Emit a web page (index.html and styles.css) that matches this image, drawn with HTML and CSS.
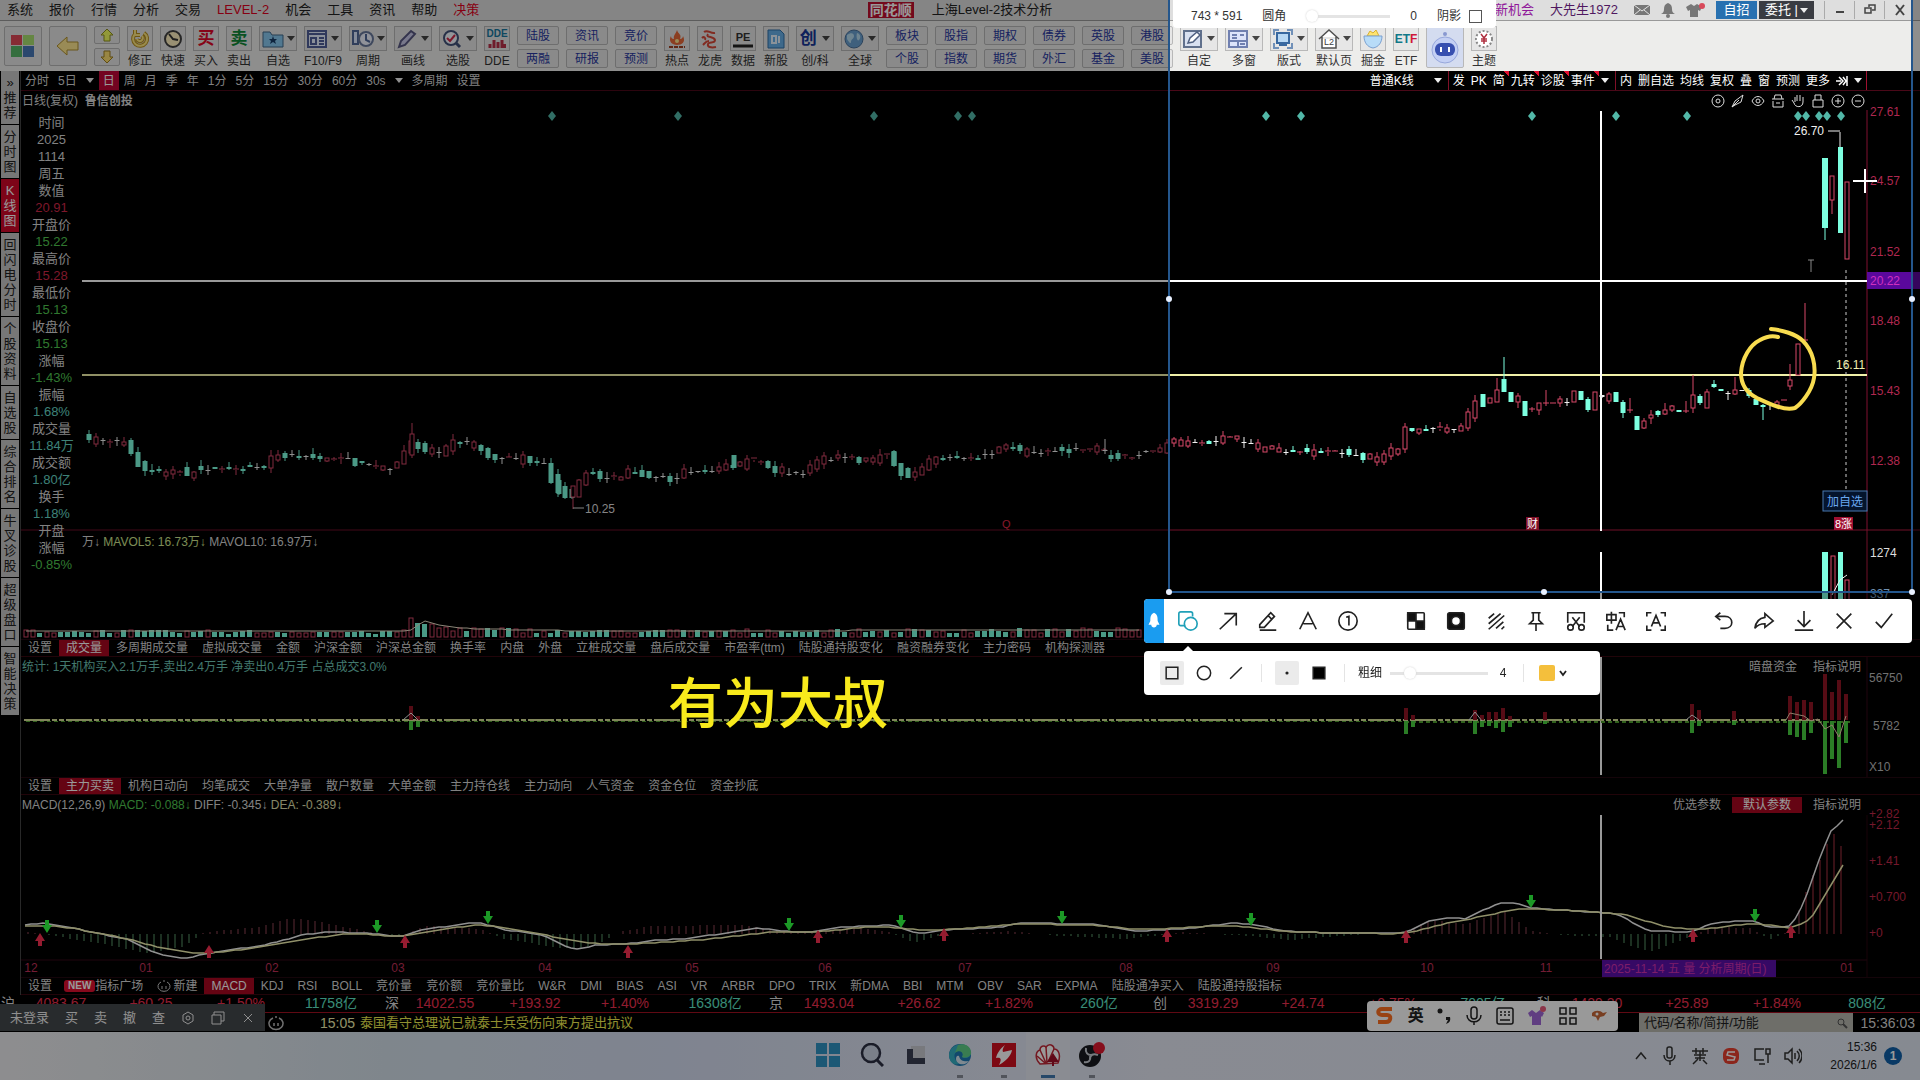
FILE: index.html
```html
<!DOCTYPE html>
<html lang="zh-CN">
<head>
    <meta charset="UTF-8">
    <title>同花顺 上海Level-2技术分析</title>
    <link rel="stylesheet" href="styles.css">
</head>
<body>
<div class="app">

    <!-- 标题栏 -->
    <header class="titlebar">
        <nav class="menu">
            <a href="#">系统</a><a href="#">报价</a><a href="#">行情</a><a href="#">分析</a><a href="#">交易</a><a href="#" class="hot">LEVEL-2</a><a href="#">机会</a><a href="#">工具</a><a href="#">资讯</a><a href="#">帮助</a><a href="#" class="hot">决策</a>
        </nav>
        <div class="brand"><span class="brand-logo">同花顺</span><span>上海Level-2技术分析</span></div>
        <div class="account">
            <a href="#" class="chance">最新机会</a>
            <span class="user">大先生1972</span>
            <svg width="16" height="16" viewBox="0 0 16 16"><path d="M0 3h16v10H0z" fill="#777"/><path d="M0 3l8 6 8-6M0 13l6-5M16 13l-6-5" stroke="#e4e4e4" fill="none"/></svg>
            <svg width="16" height="16" viewBox="0 0 16 16"><path d="M8 1c-3 1-4 3-4 6 0 3-1 4-3 5h14c-2-1-3-2-3-5 0-3-1-5-4-6z" fill="#777"/><circle cx="8" cy="14" r="2" fill="#777"/></svg>
            <svg width="20" height="16" viewBox="0 0 20 16"><path d="M5 2l3 2 3-2 5 3-2 4-2-1v7H4V8L2 9 0 5z" fill="#777"/><circle cx="16" cy="4" r="3" fill="#d8495a"/></svg>
            <button class="tag blue">自招</button>
            <button class="tag dark">委托 | <i class="caret light"></i></button>
            <button class="win" aria-label="最小化"><svg width="12" height="12" viewBox="0 0 12 12"><path d="M2 8h8" stroke="#444" stroke-width="2"/></svg></button>
            <button class="win" aria-label="还原"><svg width="12" height="12" viewBox="0 0 12 12"><path d="M1 4h6v5H1zM5 3V1h6v5H8" stroke="#444" fill="none" stroke-width="1.5"/></svg></button>
            <button class="win" aria-label="关闭"><svg width="12" height="12" viewBox="0 0 12 12"><path d="M2 1l8 10M10 1L2 11" stroke="#444" stroke-width="2"/></svg></button>
        </div>
    </header>

    <!-- 工具栏 -->
    <div class="toolbar">
        <button class="big" aria-label="主页"><svg width="26" height="26" viewBox="0 0 26 26"><path d="M1 2h11v10H1z" fill="#e04858"/><path d="M13 2h11v10H13z" fill="#a8e070"/><path d="M1 13h11v11H1z" fill="#58b868"/><path d="M13 13h11v11H13z" fill="#4878b8"/></svg></button>
        <button class="big" aria-label="后退"><svg width="26" height="24" viewBox="0 0 26 24"><path d="M2 12L12 3v5h11v8H12v5z" fill="#ffe890" stroke="#b09030"/></svg></button>
        <div class="updown">
            <button aria-label="上翻"><svg width="14" height="14" viewBox="0 0 14 14"><path d="M7 1l6 6h-3v6H4V7H1z" fill="#f4ff60" stroke="#909020"/></svg></button>
            <button aria-label="下翻"><svg width="14" height="14" viewBox="0 0 14 14"><path d="M7 13l6-6h-3V1H4v6H1z" fill="#ffe070" stroke="#a08020"/></svg></button>
        </div>
        <button class="tool"><span class="face"><svg width="20" height="20" viewBox="0 0 20 20"><path d="M5 5a7 7 0 1 0 9-1M5 1v5h5M7 10a3 3 0 1 0 5-3" fill="none" stroke="#b89020" stroke-width="4"/><path d="M5 5a7 7 0 1 0 9-1M5 1v5h5M7 10a3 3 0 1 0 5-3" fill="none" stroke="#ffe880" stroke-width="2"/></svg></span>修正</button>
        <button class="tool"><span class="face"><svg width="20" height="20" viewBox="0 0 20 20"><circle cx="10" cy="10" r="8" fill="#fff0c0" stroke="#404040" stroke-width="2"/><path d="M6 5l4 5 5 1" stroke="#333" fill="none" stroke-width="2"/></svg></span>快速</button>
        <button class="tool"><span class="face glyph buy">买</span>买入</button>
        <button class="tool"><span class="face glyph sell">卖</span>卖出</button>
        <button class="tool drop"><span class="face"><svg width="22" height="20" viewBox="0 0 22 20"><path d="M1 3h7l2 3h11v12H1z" fill="#88c8f0" stroke="#40688a"/><path d="M11 7l1 3h3l-2 2 1 3-3-2-3 2 1-3-2-2h3z" fill="#183c68"/></svg><i class="caret"></i></span>自选</button>
        <button class="tool drop"><span class="face"><svg width="20" height="20" viewBox="0 0 20 20"><path d="M1 2h18v16H1z" fill="#e8f0ff" stroke="#50609a" stroke-width="2"/><path d="M1 5h18M4 9h5v6H4zM12 9h5M12 12h5M12 15h5" stroke="#50609a" fill="none" stroke-width="2"/></svg><i class="caret"></i></span>F10/F9</button>
        <button class="tool drop"><span class="face"><svg width="22" height="20" viewBox="0 0 22 20"><path d="M1 2h5v13H1z" fill="#dce8ff" stroke="#506898" stroke-width="2"/><circle cx="14" cy="10" r="7" fill="#f0f4ff" stroke="#68789c" stroke-width="2"/><path d="M14 5v6l4 2" stroke="#506898" fill="none" stroke-width="2"/></svg><i class="caret"></i></span>周期</button>
        <button class="tool drop"><span class="face"><svg width="20" height="20" viewBox="0 0 20 20"><path d="M2 18l2-6L14 2l4 3L8 16z" fill="#c8c8e8" stroke="#585880" stroke-width="2"/></svg><i class="caret"></i></span>画线</button>
        <button class="tool drop"><span class="face"><svg width="20" height="20" viewBox="0 0 20 20"><circle cx="9" cy="9" r="7" fill="#f4f8ff" stroke="#405078" stroke-width="2"/><path d="M14 14l4 4" stroke="#405078" stroke-width="3"/><path d="M5 9l3 3 5-6" stroke="#d02848" fill="none" stroke-width="2"/></svg><i class="caret"></i></span>选股</button>
        <button class="tool"><span class="face col"><b class="dde">DDE</b><svg width="18" height="9" viewBox="0 0 18 9"><path d="M2 9V5M6 9V1M10 9V3M14 9V1M17 9V5" stroke="#b83048" stroke-width="3"/></svg></span>DDE</button>
        <div class="pair"><button>陆股</button><button>两融</button></div>
        <div class="pair"><button>资讯</button><button>研报</button></div>
        <div class="pair"><button>竞价</button><button>预测</button></div>
        <button class="tool"><span class="face"><svg width="20" height="20" viewBox="0 0 20 20"><path d="M10 1c1 4 5 4 3 9 2 0 3-2 3-3 3 6-1 9-6 9s-9-4-6-9c0 2 1 3 3 3-1-4 2-5 3-9z" fill="#e86838"/><circle cx="10" cy="12" r="2" fill="#ffe890"/><path d="M2 18h16" stroke="#a04020" stroke-width="2" stroke-dasharray="4 1"/></svg></span>热点</button>
        <button class="tool"><span class="face"><svg width="20" height="20" viewBox="0 0 20 20"><path d="M4 3c4-3 6 2 11 1M8 5c-3 4 6 2 7 6 0 4-6 1-7 4s3 4 8 3M2 9c2-2 4 0 3 2M3 16c2-2 3-4 6-4" stroke="#d84838" fill="none" stroke-width="2"/></svg></span>龙虎</button>
        <button class="tool"><span class="face col"><b class="pe">PE</b><svg width="20" height="4" viewBox="0 0 20 4"><path d="M0 2h20" stroke="#222" stroke-width="3"/></svg></span>数据</button>
        <button class="tool"><span class="face"><svg width="18" height="20" viewBox="0 0 18 20"><path d="M1 1h12l4 4v14H1z" fill="#68b0e8" stroke="#3070a8"/><path d="M5 7h4v7H5zM12 7v7" stroke="#e8f4ff" fill="none" stroke-width="2"/></svg></span>新股</button>
        <button class="tool drop"><span class="face glyph new">创<i class="caret"></i></span>创/科</button>
        <button class="tool drop"><span class="face"><svg width="20" height="20" viewBox="0 0 20 20"><circle cx="10" cy="10" r="9" fill="#6aa0d0" stroke="#48709a"/><path d="M3 6c4-3 7-2 7 1s-3 3-3 6-3-1-4-3zM13 4c4 1 4 5 2 7s-3-4-2-7z" fill="#b8dcf0"/></svg><i class="caret"></i></span>全球</button>
        <div class="pair"><button>板块</button><button>个股</button></div>
        <div class="pair"><button>股指</button><button>指数</button></div>
        <div class="pair"><button>期权</button><button>期货</button></div>
        <div class="pair"><button>债券</button><button>外汇</button></div>
        <div class="pair"><button>英股</button><button>基金</button></div>
        <div class="pair"><button>港股</button><button>美股</button></div>
        <button class="tool drop"><span class="face"><svg width="20" height="20" viewBox="0 0 20 20"><path d="M1 2h17v16H1z" fill="#d8e0f0" stroke="#60708c" stroke-width="2"/><path d="M5 14l2-5 7-6 3 3-7 7z" fill="#fff" stroke="#506080" stroke-width="1.5"/></svg><i class="caret"></i></span>自定</button>
        <button class="tool drop"><span class="face"><svg width="20" height="20" viewBox="0 0 20 20"><path d="M1 2h18v16H1z" fill="#dde4fa" stroke="#7080b0" stroke-width="2"/><path d="M4 6h5M12 6h4M4 9h5M1 12h18M10 12v6M12 15h5" stroke="#7080b0" stroke-width="2"/></svg><i class="caret"></i></span>多窗</button>
        <button class="tool drop"><span class="face"><svg width="20" height="20" viewBox="0 0 20 20"><path d="M1 6V1h5M14 1h5v5M19 14v5h-5M6 19H1v-5" stroke="#7090b8" fill="none" stroke-width="2"/><path d="M4 4h12v10H4z" fill="#b8d8f4" stroke="#3868a0" stroke-width="2"/><path d="M6 16h8" stroke="#3868a0" stroke-width="2"/></svg><i class="caret"></i></span>版式</button>
        <button class="tool drop"><span class="face"><svg width="22" height="20" viewBox="0 0 22 20"><path d="M1 10L11 1l10 9M4 8v11h14V8" fill="#fff" stroke="#505050" stroke-width="1.5"/><text x="6" y="16" font-size="9" fill="#404040">L2</text></svg><i class="caret"></i></span>默认页</button>
        <button class="tool"><span class="face"><svg width="22" height="20" viewBox="0 0 22 20"><path d="M5 7l3-5 3 2 3-3 3 6z" fill="#ffe470" stroke="#d8b030"/><path d="M2 7h18c0 6-3 11-9 12C5 18 2 13 2 7z" fill="#b8dcf8" stroke="#7aa0d0"/></svg></span>掘金</button>
        <button class="tool"><span class="face etf">ET<b>F</b></span>ETF</button>
        <button class="robot" aria-label="问财"><svg width="28" height="34" viewBox="0 0 28 34"><circle cx="14" cy="4" r="2" fill="#8898d0"/><circle cx="14" cy="20" r="13" fill="#c4d0f4" stroke="#98a8dc"/><rect x="4" y="13" width="20" height="13" rx="6" fill="#3850b0"/><path d="M10 17v5M18 17v5" stroke="#fff" stroke-width="2"/></svg></button>
        <button class="tool"><span class="face"><svg width="20" height="20" viewBox="0 0 20 20"><circle cx="10" cy="10" r="8" fill="#fff" stroke="#888" stroke-width="2" stroke-dasharray="2 2"/><path d="M7 5l3 4 3-4M10 9v6M7 10h6M7 12h6" stroke="#b03040" fill="none" stroke-width="1.5"/></svg></span>主题</button>
    </div>

    <div class="workspace">
        <nav class="sidebar">
            <button>» 推荐</button>
            <button>分时图</button>
            <button class="on">K 线图</button>
            <button>回闪电分时</button>
            <button>个股资料</button>
            <button>自选股</button>
            <button>综合排名</button>
            <button>牛叉诊股</button>
            <button>超级盘口</button>
            <button>智能决策</button>
        </nav>

        <main class="terminal">
            <div class="periods">
                <div class="group">
                    <button>分时</button><button>5日</button><i class="caret light"></i><button class="on">日</button><button>周</button><button>月</button><button>季</button><button>年</button><button>1分</button><button>5分</button><button>15分</button><button>30分</button><button>60分</button><button>30s</button><i class="caret light"></i><button>多周期</button><button>设置</button>
                </div>
                <div class="group right">
                    <button class="kline">普通K线</button><i class="caret light"></i><button class="cut">发</button><button>PK</button><button class="new">简</button><button class="new">九转</button><button class="new">诊股</button><button class="new">事件</button><i class="caret light"></i><button class="cut">内</button><button>删自选</button><button>均线</button><button>复权</button><button>叠</button><button>窗</button><button>预测</button><button>更多</button><svg width="12" height="12" viewBox="0 0 12 12"><path d="M0 6h5M3 2l4 4-4 4M7 2l3 4-3 4M11 1v10" stroke="#fff" fill="none" stroke-width="1.5"/></svg><i class="caret light"></i>
                </div>
            </div>
            <div class="caption">
                <span>日线(复权)&nbsp; <b>鲁信创投</b></span>
                <div class="draw-tools">
                    <svg viewBox="0 0 14 14"><circle cx="7" cy="7" r="6"/><circle cx="7" cy="7" r="2"/></svg>
                    <svg viewBox="0 0 14 14"><path d="M1 13l3-6 8-6-2 7-6 3zM1 13l7-7"/></svg>
                    <svg viewBox="0 0 14 14"><path d="M1 7c3-6 9-6 12 0-3 6-9 6-12 0z"/><circle cx="7" cy="7" r="2"/></svg>
                    <svg viewBox="0 0 14 14"><path d="M1 5h12M3 5l1-4h6l1 4M2 7v6h10V7M5 9h4"/></svg>
                    <svg viewBox="0 0 14 14"><path d="M3 9L1 6M4 8V3M6 7V1M9 7V1M12 8V3M3 9c1 5 9 5 9-1"/></svg>
                    <svg viewBox="0 0 14 14"><path d="M2 6h10v7H2zM4 6V1h6v5"/></svg>
                    <svg viewBox="0 0 14 14"><circle cx="7" cy="7" r="6"/><path d="M4 7h6M7 4v6"/></svg>
                    <svg viewBox="0 0 14 14"><circle cx="7" cy="7" r="6"/><path d="M4 7h6"/></svg>
                </div>
            </div>

            <div class="stage">
                <svg id="price" class="chart" viewBox="21 110 1899 421" preserveAspectRatio="none"></svg>
                <svg id="volume" class="chart" viewBox="21 531 1899 108" preserveAspectRatio="none"></svg>
                <ul class="quote">
                    <li>时间</li><li>2025</li><li>1114</li><li>周五</li>
                    <li>数值</li><li class="up">20.91</li>
                    <li>开盘价</li><li class="down">15.22</li>
                    <li>最高价</li><li class="up">15.28</li>
                    <li>最低价</li><li class="down">15.13</li>
                    <li>收盘价</li><li class="down">15.13</li>
                    <li>涨幅</li><li class="down">-1.43%</li>
                    <li>振幅</li><li class="flat">1.68%</li>
                    <li>成交量</li><li class="flat">11.84万</li>
                    <li>成交额</li><li class="flat">1.80亿</li>
                    <li>换手</li><li class="flat">1.18%</li>
                    <li>开盘</li><li>涨幅</li><li class="down">-0.85%</li>
                </ul>
                <div class="volume-head">万↓ <span class="lime">MAVOL5: 16.73万↓</span> MAVOL10: 16.97万↓</div>
            </div>

            <div class="tabs">
                <button>设置</button><button class="on">成交量</button><button>多周期成交量</button><button>虚拟成交量</button><button>金额</button><button>沪深金额</button><button>沪深总金额</button><button>换手率</button><button>内盘</button><button>外盘</button><button>立桩成交量</button><button>盘后成交量</button><button>市盈率(ttm)</button><button>陆股通持股变化</button><button>融资融券变化</button><button>主力密码</button><button>机构探测器</button>
            </div>
            <section class="panel force">
                <svg id="force" class="chart" viewBox="21 657 1899 120" preserveAspectRatio="none"></svg>
                <div class="panel-head">
                    <span class="stat">统计: 1天机构买入2.1万手,卖出2.4万手 净卖出0.4万手 占总成交3.0%</span>
                    <span class="links"><button>暗盘资金</button><button>指标说明</button></span>
                </div>
            </section>

            <div class="tabs">
                <button>设置</button><button class="on">主力买卖</button><button>机构日动向</button><button>均笔成交</button><button>大单净量</button><button>散户数量</button><button>大单金额</button><button>主力持仓线</button><button>主力动向</button><button>人气资金</button><button>资金仓位</button><button>资金抄底</button>
            </div>
            <section class="panel macd">
                <svg id="macd" class="chart" viewBox="21 795 1899 182" preserveAspectRatio="none"></svg>
                <div class="panel-head">
                    <span>MACD(12,26,9) <span class="down">MACD: -0.088↓</span> DIFF: -0.345↓ <span class="pale">DEA: -0.389↓</span></span>
                    <span class="links wide"><button>优选参数</button><button class="on">默认参数</button><button>指标说明</button></span>
                </div>
            </section>

            <div class="tabs">
                <button>设置</button><button class="badge-tab"><b class="badge">NEW</b>指标广场</button><button><svg width="14" height="12" viewBox="0 0 14 12"><path d="M4 2a6 5 0 1 0 6 0M5 6v3M9 6v3M7 0v2" stroke="#ccc" fill="none"/></svg> 新建</button><button class="on">MACD</button><button>KDJ</button><button>RSI</button><button>BOLL</button><button>竞价量</button><button>竞价额</button><button>竞价量比</button><button>W&amp;R</button><button>DMI</button><button>BIAS</button><button>ASI</button><button>VR</button><button>ARBR</button><button>DPO</button><button>TRIX</button><button>新DMA</button><button>BBI</button><button>MTM</button><button>OBV</button><button>SAR</button><button>EXPMA</button><button>陆股通净买入</button><button>陆股通持股指标</button>
            </div>
        </main>
    </div>

    <!-- 指数行情 -->
    <div class="indices">
        <div><b>沪</b><span>4083.67</span><span>+60.25</span><span>+1.50%</span><em>11758亿</em></div>
        <div><b>深</b><span>14022.55</span><span>+193.92</span><span>+1.40%</span><em>16308亿</em></div>
        <div><b>京</b><span>1493.04</span><span>+26.62</span><span>+1.82%</span><em>260亿</em></div>
        <div><b>创</b><span>3319.29</span><span>+24.74</span><span>+0.75%</span><em>7005亿</em></div>
        <div><b>科</b><span>1429.30</span><span>+25.89</span><span>+1.84%</span><em>808亿</em></div>
    </div>
    <div class="statusbar">
        <svg width="16" height="16" viewBox="0 0 16 16"><path d="M5 3a7 6 0 1 0 6 0M6 8v3M10 8v3M8 1v2" stroke="#bbb" fill="none" stroke-width="1.5"/></svg>
        <span class="news-time">15:05</span>
        <a href="#" class="news">泰国看守总理说已就泰士兵受伤向柬方提出抗议</a>
        <label class="search"><input type="text" placeholder="代码/名称/简拼/功能" aria-label="代码搜索"><svg width="12" height="12" viewBox="0 0 12 12"><circle cx="5" cy="5" r="3" fill="none" stroke="#555"/><path d="M7 7l4 4" stroke="#555" stroke-width="2"/></svg></label>
        <span class="clock">15:36:03</span>
    </div>

    <!-- 任务栏 -->
    <footer class="taskbar">
        <div class="apps">
            <button aria-label="开始"><svg width="24" height="24" viewBox="0 0 24 24"><path d="M0 0h11v11H0zM13 0h11v11H13zM0 13h11v11H0zM13 13h11v11H13z" fill="#2f93c4"/></svg></button>
            <button aria-label="搜索"><svg width="24" height="24" viewBox="0 0 24 24"><circle cx="11" cy="10" r="9" fill="#ccd4e4" stroke="#2c3044" stroke-width="2.5"/><path d="M17 17l6 6" stroke="#2c3044" stroke-width="3"/></svg></button>
            <button aria-label="任务视图"><svg width="22" height="22" viewBox="0 0 22 22"><path d="M6 2h14v14H6z" fill="#c8cad0"/><path d="M2 5h6v9h12v6H2z" fill="#3a3f52"/></svg></button>
            <button class="run" aria-label="Edge"><svg width="24" height="24" viewBox="0 0 24 24"><circle cx="12" cy="12" r="11" fill="#1d78b4"/><path d="M1 12C2-1 22-3 23 10c0 5-6 6-9 4 3-5-3-8-6-5-2 2-3 7 3 12C5 23 1 18 1 12z" fill="#36b0c4"/><path d="M10 2c8-3 14 3 13 9-2 4-7 4-9 3 3-5-3-8-7-4z" fill="#5fcf88"/><path d="M11 13c1 5 6 6 10 5-5 6-13 3-13-2 0-2 1-4 3-3z" fill="#d4e4f0"/></svg></button>
            <button class="run" aria-label="交易软件"><svg width="24" height="24" viewBox="0 0 24 24"><path d="M0 0h24v24H0z" fill="#d01020"/><path d="M13 2c-2 3-3 5-2 7l9-2c-1 6-6 11-13 15 3-6 2-8-3-7 1-5 5-10 9-13z" fill="#fff"/></svg></button>
            <button class="run active" aria-label="同花顺"><svg width="26" height="24" viewBox="0 0 26 24"><path d="M5 21C-1 15 1 8 5 7c0-4 4-5 6-3 3-4 8-2 8 2 5 0 7 7 4 14z" fill="#fff" stroke="#c02838" stroke-width="1.5"/><path d="M11 20L5 7M12 20L11 4M13 19l6-13M10 20L2 13" stroke="#c02838" stroke-width="1.5"/><path d="M18 10l6 9H12z" fill="#a01028"/><path d="M18 17v6" stroke="#a01028" stroke-width="2"/></svg></button>
            <button class="run" aria-label="OBS"><svg width="28" height="26" viewBox="0 0 28 26"><circle cx="12" cy="14" r="11" fill="#181a20"/><path d="M8 6c-1 5 2 7 5 7M20 13c-5-2-8 0-8 4M6 20c5 1 7-2 6-6" stroke="#c8ccd4" fill="none" stroke-width="2"/><circle cx="21" cy="6" r="6" fill="#e01830"/></svg></button>
        </div>
        <div class="tray">
            <svg width="16" height="16" viewBox="0 0 16 16"><path d="M3 11l5-6 5 6"/></svg>
            <svg width="16" height="20" viewBox="0 0 16 20"><rect x="5" y="1" width="5" height="11" rx="2"/><path d="M2 9c0 8 11 8 11 0M8 15v4"/></svg>
            <svg width="18" height="18" viewBox="0 0 18 18"><path d="M1 4h16M5 1v6M12 1v6M3 8h12M9 4v10M4 11h10M2 17l5-5M16 17l-4-4"/></svg>
            <svg width="18" height="18" viewBox="0 0 18 18"><rect x="1" y="1" width="16" height="16" rx="6" fill="#e84030" stroke="none"/><path d="M13 5H6L5 8l8 2-1 3H5" stroke="#fff"/></svg>
            <svg width="18" height="18" viewBox="0 0 18 18"><path d="M11 2H2v11h9M13 2h4v5h-4zM15 7v9M6 17h6"/></svg>
            <svg width="18" height="18" viewBox="0 0 18 18"><path d="M1 6h3l4-4v14l-4-4H1zM11 6v6M13 4c3 3 3 7 0 10M15 2c4 4 4 10 0 14"/></svg>
            <div class="date"><span>15:36</span><span>2026/1/6</span></div>
            <b class="count">1</b>
        </div>
    </footer>
</div>

<!-- 浮动条 -->
<div class="login-bar">
    <button>未登录</button><button>买</button><button>卖</button><button>撤</button><button>查</button>
    <button aria-label="设置"><svg width="14" height="14" viewBox="0 0 14 14"><path d="M7 1l5 3v6l-5 3-5-3V4z"/><circle cx="7" cy="7" r="2"/></svg></button>
    <button aria-label="弹出"><svg width="14" height="14" viewBox="0 0 14 14"><path d="M1 4h9v9H1zM3 4V1h10v9h-3"/></svg></button>
    <button aria-label="关闭"><svg width="14" height="14" viewBox="0 0 14 14"><path d="M3 3l8 8M11 3l-8 8"/></svg></button>
</div>
<div class="ime">
    <svg width="20" height="20" viewBox="0 0 20 20"><path d="M17 3H7C2 3 2 9 7 9h5c5 0 4 7-1 7H3" stroke="#ff7020" stroke-width="4" fill="none"/></svg>
    <b>英</b>
    <svg width="16" height="20" viewBox="0 0 16 20"><circle cx="4" cy="5" r="2.5" fill="#222" stroke="none"/><path d="M10 11h4c1 4-1 6-4 7l2-4h-2z" fill="#222" stroke="none"/></svg>
    <svg width="18" height="20" viewBox="0 0 18 20"><rect x="6" y="1" width="6" height="12" rx="3"/><path d="M2 9c0 9 14 9 14 0M9 15v4"/></svg>
    <svg width="18" height="20" viewBox="0 0 18 20"><rect x="1" y="2" width="16" height="16" rx="2"/><path d="M4 6h10M4 9h10" stroke-dasharray="2 2"/><path d="M4 14h10"/></svg>
    <svg width="20" height="20" viewBox="0 0 20 20"><path d="M5 4l4 3 4-3 4 3-2 4-1-1v9H5v-9l-2 1-2-4z" fill="#a068d8" stroke="none"/><circle cx="16" cy="3" r="3" fill="#e85878" stroke="none"/></svg>
    <svg width="18" height="20" viewBox="0 0 18 20"><rect x="1" y="2" width="6" height="6"/><rect x="11" y="2" width="6" height="6"/><rect x="1" y="12" width="6" height="6"/><rect x="11" y="12" width="6" height="6"/></svg>
    <svg width="18" height="16" viewBox="0 0 18 16"><path d="M2 5c3-3 8-3 11 0l4-1-3 4-4 1-2 4-2-4-4-1z" fill="#c86838" stroke="none"/><circle cx="7" cy="6" r="1.5" fill="#fff" stroke="none"/></svg>
</div>

<!-- 截图选区 -->
<div class="selection">
    <i class="handle w"></i><i class="handle e"></i><i class="handle sw"></i><i class="handle s"></i><i class="handle se"></i>
</div>

<div class="snip-size">
    <span>743 * 591</span>
    <label for="radius">圆角</label>
    <input type="range" id="radius" min="0" max="50" value="0">
    <output for="radius">0</output>
    <label class="shadow-opt">阴影 <input type="checkbox"></label>
</div>

<div class="snip">
    <div class="snip-bar">
        <span class="snip-tab"><svg width="14" height="24" viewBox="0 0 14 24"><path d="M7 3c4 2 4 5 4 9l2 4h-3c0 4-6 4-6 0H1l2-4c0-4 0-7 4-9z" fill="#fff"/></svg></span>
        <button class="sel" aria-label="形状"><svg viewBox="0 0 24 24"><path d="M9 17H4a2 2 0 0 1-2-2V4a2 2 0 0 1 2-2h11a2 2 0 0 1 2 2v3"/><circle cx="15" cy="15" r="7"/></svg></button>
        <button aria-label="箭头"><svg viewBox="0 0 24 24"><path d="M3 21L21 4M8 4h13v13"/></svg></button>
        <button aria-label="画笔"><svg viewBox="0 0 24 24"><path d="M3 16L15 3l4 4L8 19H3zM12 6l4 4M3 22h18"/></svg></button>
        <button aria-label="文字"><svg viewBox="0 0 24 24"><path d="M3 21l9-18 9 18M7 15h10"/></svg></button>
        <button aria-label="序号"><svg viewBox="0 0 24 24"><circle cx="12" cy="12" r="10"/><path d="M10 8l3-1v10"/></svg></button>
        <span class="gap"></span>
        <button aria-label="马赛克"><svg viewBox="0 0 24 24"><rect x="3" y="3" width="18" height="18" rx="1"/><path d="M3 3h9v9H3zM12 12h9v9h-9z" fill="#111"/></svg></button>
        <button aria-label="聚光灯"><svg viewBox="0 0 24 24"><rect x="3" y="3" width="18" height="18" rx="2" fill="#111"/><circle cx="12" cy="12" r="5" fill="#fff"/></svg></button>
        <button aria-label="水印"><svg viewBox="0 0 24 24"><path d="M4 9l6-5M4 15L17 4M4 21L21 6M12 20l8-7M18 21l3-3"/></svg></button>
        <button aria-label="贴图"><svg viewBox="0 0 24 24"><path d="M7 3h10M9 3v8l-4 4h14l-4-4V3M12 15v8"/></svg></button>
        <button aria-label="截长图"><svg viewBox="0 0 24 24"><path d="M3 14V3h18v11M8 8l8 10M16 8L8 18"/><circle cx="6" cy="19" r="3"/><circle cx="18" cy="19" r="3"/></svg></button>
        <button aria-label="翻译"><svg viewBox="0 0 24 24"><path d="M2 5h10v6H2zM7 2v13M15 3h6v5M3 16v6h6M12 22l5-12 5 12M14 18h6"/></svg></button>
        <button aria-label="识别文字"><svg viewBox="0 0 24 24"><path d="M2 7V3h5M17 3h5v4M22 17v5h-5M7 22H2v-5M7 18l5-12 5 12M9 14h6"/></svg></button>
        <span class="gap"></span>
        <button aria-label="撤销"><svg viewBox="0 0 24 24"><path d="M8 3L3 7l5 4M3 7h10c10 0 10 13 0 13H8"/></svg></button>
        <button aria-label="分享"><svg viewBox="0 0 24 24"><path d="M13 4l9 8-9 7v-4c-5 0-8 1-11 5 1-7 4-11 11-12z"/></svg></button>
        <button aria-label="保存"><svg viewBox="0 0 24 24"><path d="M12 1v16M5 11l7 7 7-7M2 22h20"/></svg></button>
        <button aria-label="取消"><svg viewBox="0 0 24 24"><path d="M4 4l16 16M20 4L4 20"/></svg></button>
        <button aria-label="完成"><svg viewBox="0 0 24 24"><path d="M3 13l6 6L21 4"/></svg></button>
    </div>
    <div class="snip-opts">
        <button class="pick" aria-label="矩形"><svg viewBox="0 0 24 24"><path d="M5 5h14v14H5z"/></svg></button>
        <button aria-label="椭圆"><svg viewBox="0 0 24 24"><circle cx="12" cy="12" r="8"/></svg></button>
        <button aria-label="直线"><svg viewBox="0 0 24 24"><path d="M5 19L19 5"/></svg></button>
        <i class="sep"></i>
        <button class="pick" aria-label="描边"><svg viewBox="0 0 24 24"><circle cx="12" cy="12" r="1" fill="#111"/></svg></button>
        <button aria-label="填充"><svg viewBox="0 0 24 24"><path d="M5 5h14v14H5z" fill="#000"/></svg></button>
        <i class="sep"></i>
        <label for="stroke">粗细</label>
        <input type="range" id="stroke" min="1" max="20" value="4">
        <output for="stroke">4</output>
        <i class="sep"></i>
        <button class="colour" aria-label="颜色"><i class="swatch"></i><svg width="8" height="8" viewBox="0 0 8 8"><path d="M1 2l3 4 3-4"/></svg></button>
    </div>
</div>

<div class="watermark">有为大叔</div>

<script src="charts.js"></script>
</body>
</html>
```
FILE: styles.css
```css
* { box-sizing: border-box; }
html, body { height: 100%; }
body {
    margin: 0;
    overflow: hidden;
    background: #000;
    color: #d8d8d8;
    font-family: "Liberation Sans", "Noto Sans CJK SC", sans-serif;
    font-size: 12px;
    line-height: 16px;
}
button {
    margin: 0;
    padding: 0;
    border: 0;
    background: none;
    color: inherit;
    font: inherit;
    white-space: nowrap;
}
a { color: inherit; text-decoration: none; }
svg { display: block; flex: none; }
.app { display: flex; flex-direction: column; height: 100vh; }

.caret {
    border: 4px solid transparent;
    border-top: 5px solid #444;
    border-bottom: 0;
}
.caret.light { border-top-color: #eee; }

/* 标题栏 */
.titlebar {
    display: grid;
    grid-template-columns: 1fr auto 1fr;
    align-items: center;
    height: 20px;
    background: #dedede;
    color: #222;
    font-size: 13px;
}
.menu { display: flex; gap: 16px; padding-left: 7px; }
.hot { color: #e00020; }
.brand { display: flex; gap: 18px; }
.brand-logo {
    padding: 0 2px;
    background: #c01030;
    color: #fff;
    font-size: 14px;
    font-weight: bold;
}
.account {
    display: flex;
    align-items: center;
    justify-content: flex-end;
    gap: 10px;
}
.chance { color: #90189a; }
.user { color: #501860; padding: 0 6px; }
.tag { display: flex; align-items: center; gap: 2px; height: 18px; padding: 0 6px; color: #fff; }
.tag.blue { background: #2870b0; width: 41px; justify-content: center; }
.tag.dark { background: #3a3c42; margin-left: -8px; }
.win {
    display: flex;
    align-items: center;
    justify-content: center;
    width: 30px;
    height: 18px;
    border-left: 1px solid #aaa;
    margin-right: -10px;
}
.win:last-child { margin-right: 6px; }

/* 工具栏 */
.toolbar {
    display: flex;
    gap: 7px;
    height: 51px;
    padding: 5px 4px 0;
    border-top: 1px solid #999;
    background: #ededeb;
    color: #333;
}
.toolbar > * { flex: none; }
.toolbar button { border-radius: 2px; }
.big, .robot, .face, .updown button, .pair button { border: 1px solid #b8b8b8; background: #e6e6e6; }
.big { display: flex; align-items: center; justify-content: center; width: 38px; height: 40px; }
.updown { display: flex; flex-direction: column; gap: 4px; }
.updown button { display: flex; align-items: center; justify-content: center; width: 26px; height: 18px; }
.tool { display: flex; flex-direction: column; align-items: center; width: 26px; }
.tool.drop { width: 38px; }
.face {
    display: flex;
    align-items: center;
    justify-content: space-around;
    align-self: stretch;
    height: 25px;
    margin-bottom: 2px;
}
.face.col { flex-direction: column; justify-content: center; }
.face.glyph { font-size: 17px; font-weight: bold; }
.buy { color: #e00828; }
.sell { color: #108838; }
.new.face { color: #183898; }
.dde { color: #1878a0; font-size: 10px; line-height: 10px; }
.pe { font-size: 11px; line-height: 14px; }
.etf { color: #107888; font-weight: bold; justify-content: center; }
.etf b { color: #d01838; }
.pair { display: flex; flex-direction: column; gap: 4px; }
.pair button { width: 42px; height: 19px; color: #2838a0; }
.robot { display: flex; align-items: center; justify-content: center; width: 38px; height: 42px; background: #d4dcf0; }

/* 主体 */
.workspace { display: flex; flex: 1; min-height: 0; }
.sidebar {
    display: flex;
    flex-direction: column;
    width: 21px;
    padding: 0 1px;
    border-right: 1px solid #444;
}
.sidebar button {
    padding: 4px 2px;
    border-bottom: 1px solid #000;
    background: #c6c6c6;
    color: #222;
    font-size: 13px;
    line-height: 15px;
    white-space: normal;
    word-break: break-all;
}
.sidebar .on { background: #d00828; color: #fff; }
.terminal { display: flex; flex: 1; flex-direction: column; min-width: 0; }

.periods {
    display: flex;
    justify-content: space-between;
    height: 20px;
    padding-right: 53px;
    border-bottom: 1px solid #4a0818;
}
.group { display: flex; align-items: center; gap: 9px; padding-left: 4px; }
.group.right { gap: 6px; padding-right: 4px; border-right: 1px solid #a01030; color: #fff; }
.group .on { align-self: stretch; margin: 0 -4px; padding: 0 4px; background: #c00838; color: #fff; }
.kline { margin-right: 14px; }
.cut { align-self: stretch; padding-left: 4px; border-left: 1px solid #801028; }
.group .new {
    align-self: stretch;
    background: linear-gradient(225deg, #e01030 4px, transparent 4px);
    margin-right: -4px;
    padding-right: 4px;
}
.caption { display: flex; justify-content: space-between; align-items: center; height: 19px; padding: 0 55px 0 1px; }
.draw-tools { display: flex; gap: 6px; }
.draw-tools svg { width: 14px; height: 14px; fill: none; stroke: #ddd; }

.chart { width: 100%; height: 100%; min-height: 0; overflow: visible; }
.chart text { font-size: 12px; }
.stage {
    display: grid;
    flex: 529 1 0;
    grid-template-columns: 61px 1fr;
    grid-template-rows: 421fr 108fr;
    min-height: 0;
}
#price { grid-area: 1 / 1 / 2 / 3; }
#volume { grid-area: 2 / 1 / 3 / 3; }
.quote {
    grid-area: 1 / 1 / 3 / 2;
    margin: 4px 0 0;
    padding: 0;
    list-style: none;
    text-align: center;
    font-size: 13px;
    line-height: 17px;
    white-space: nowrap;
}
.volume-head { grid-area: 2 / 2 / 3 / 3; padding-top: 3px; }
.up { color: #d02848; }
.down { color: #50c850; }
.flat { color: #68d8c8; }
.lime { color: #d0e890; }
.pale { color: #e0e0b0; }

.tabs { display: flex; height: 18px; border-bottom: 1px solid #380810; border-top: 1px solid #220810; }
.tabs button { display: flex; align-items: center; gap: 2px; padding: 0 7px; }
.tabs .on, .links .on { background: #a80820; color: #fff; }
.tabs .badge-tab { gap: 0; padding-left: 5px; }
.badge { padding: 0 4px; border-radius: 3px; background: #e01030; color: #fff; font-size: 10px; line-height: 12px; }

.panel { display: grid; grid-template: 1fr / 1fr; min-height: 0; }
.force { flex: 120 1 0; }
.macd { flex: 182 1 0; }
.panel > * { grid-area: 1 / 1; }
.panel-head { display: flex; align-self: start; justify-content: space-between; padding: 2px 51px 0 1px; }
.links { display: flex; }
.links button { padding: 0 8px; }
.links.wide button { padding: 0 11px; }
.panel-head .wide button:last-child { padding-right: 8px; }
.stat { color: #70c8b8; }

/* 指数与状态栏 */
.indices {
    display: grid;
    grid-template-columns: repeat(5, 1fr);
    height: 18px;
    border-bottom: 1px solid #a01020;
    font-size: 14px;
    color: #f03050;
}
.indices div { display: grid; grid-template-columns: 16px repeat(4, 1fr); padding-right: 8px; text-align: center; }
.indices b { color: #ddd; font-weight: normal; }
.indices em { color: #60e8c8; font-style: normal; }
.statusbar { display: flex; align-items: center; height: 19px; padding: 0 5px 0 268px; font-size: 13px; }
.news-time { margin: 0 5px 0 36px; color: #f0f0b0; font-size: 14px; }
.news { color: #f0f050; }
.search { display: flex; align-items: center; width: 214px; height: 19px; margin-left: auto; padding: 0 5px; background: #b8b8b0; }
.search input { flex: 1; min-width: 0; padding: 0; border: 0; background: none; font: inherit; }
.search input::placeholder { color: #222; opacity: 1; }
.clock { width: 62px; text-align: right; font-size: 14px; }

/* 任务栏 */
.taskbar {
    display: grid;
    grid-template-columns: 1fr auto 1fr;
    height: 48px;
    background: linear-gradient(90deg, #ececee, #d4e0ea 20%, #d4dcf0 35%, #e4e8f4 60%, #e0e6f2);
}
.apps { grid-column: 2; display: flex; }
.apps button {
    display: flex;
    flex-direction: column;
    align-items: center;
    justify-content: center;
    width: 44px;
    border-bottom: 2px solid transparent;
}
.apps .run { background: linear-gradient(#888c98, #888c98) 50% 100% / 6px 3px no-repeat; }
.apps .active { background: linear-gradient(#4078b0, #4078b0) 50% 100% / 14px 3px no-repeat, #e6e9f3; }
.tray { display: flex; align-items: center; justify-content: flex-end; gap: 13px; padding-right: 18px; color: #222; }
.tray svg { fill: none; stroke: #333; stroke-width: 1.5; }
.date { display: flex; flex-direction: column; width: 62px; text-align: right; line-height: 18px; }
.count { width: 18px; height: 18px; margin-left: -6px; border-radius: 50%; background: #1060a8; color: #fff; line-height: 18px; text-align: center; }

.login-bar {
    position: fixed;
    left: 0;
    bottom: 49px;
    display: flex;
    align-items: center;
    gap: 16px;
    width: 265px;
    height: 27px;
    padding-left: 10px;
    background: #44484c;
    color: #eee;
    font-size: 13px;
}
.login-bar svg { fill: none; stroke: #eee; }
.ime {
    position: fixed;
    right: 302px;
    bottom: 49px;
    display: flex;
    align-items: center;
    justify-content: space-between;
    width: 251px;
    height: 30px;
    padding: 0 10px 0 8px;
    border-radius: 4px;
    background: #fff;
    color: #222;
    font-size: 16px;
}
.ime svg { fill: none; stroke: #222; stroke-width: 1.5; }

/* 截图工具 */
.selection {
    position: fixed;
    top: 0;
    right: 7px;
    width: 745px;
    height: 593px;
    border: 2px solid #24568c;
    border-top: 0;
    box-shadow: 0 0 0 9999px rgba(0, 0, 0, .4);
}
.handle { position: absolute; width: 6px; height: 6px; border-radius: 50%; background: #e8f0ff; }
.handle.w { left: -4px; top: 50%; }
.handle.e { right: -4px; top: 50%; }
.handle.sw { left: -4px; bottom: -4px; }
.handle.s { left: 50%; bottom: -4px; }
.handle.se { right: -4px; bottom: -4px; }

.snip-size {
    position: fixed;
    top: 0;
    right: 424px;
    display: flex;
    align-items: center;
    justify-content: space-between;
    width: 323px;
    height: 28px;
    padding: 4px 14px 0 18px;
    border-radius: 0 0 4px 4px;
    background: #fff;
    color: #333;
}
.snip-size input[type=range] { width: 84px; }
.shadow-opt { display: flex; align-items: center; gap: 8px; }
.shadow-opt input { appearance: none; width: 13px; height: 13px; margin: 0; border: 1px solid #555; }
input[type=range] { appearance: none; height: 14px; margin: 0; background: linear-gradient(#e4e4e4, #e4e4e4) 0 50% / 100% 3px no-repeat; }
input[type=range]::-webkit-slider-thumb { appearance: none; width: 12px; height: 12px; border-radius: 50%; background: #fff; box-shadow: 0 0 2px #ccc; }

.snip { position: fixed; top: 599px; right: 8px; width: 768px; }
.snip-bar { display: flex; height: 44px; padding-right: 8px; border-radius: 4px; background: #fff; overflow: hidden; }
.snip-tab { display: flex; align-items: center; justify-content: center; width: 20px; margin-right: 4px; background: #1a9cf0; }
.snip-bar button { display: flex; align-items: center; justify-content: center; width: 40px; }
.snip svg { width: 22px; height: 22px; fill: none; stroke: #222; stroke-width: 1.8; }
.snip .snip-tab svg { width: 14px; stroke: none; }
.snip .sel svg { stroke: #20a0b8; }
.gap { width: 28px; }
.snip-opts {
    position: relative;
    display: flex;
    align-items: center;
    gap: 8px;
    width: 456px;
    height: 44px;
    margin-top: 8px;
    padding: 0 20px 0 16px;
    border-radius: 4px;
    background: #fff;
    color: #222;
}
.snip-opts::before {
    content: "";
    position: absolute;
    left: 39px;
    top: -5px;
    border: 5px solid transparent;
    border-top: 0;
    border-bottom-color: #fff;
}
.snip-opts button { display: flex; align-items: center; justify-content: center; width: 24px; height: 24px; border-radius: 2px; }
.snip-opts svg { width: 20px; height: 20px; }
.snip-opts .pick { background: #ebebeb; }
.sep { width: 1px; height: 18px; margin: 0 5px; background: #e4e4e4; }
.snip-opts input { width: 98px; }
.snip-opts output { width: 14px; text-align: center; }
.snip-opts .colour { width: 32px; gap: 4px; }
.snip-opts .colour svg { width: 8px; height: 8px; }
.swatch { width: 16px; height: 16px; border-radius: 2px; background: #f4bf3c; }

.watermark {
    position: fixed;
    left: 668px;
    top: 659px;
    color: #f8ea1c;
    font-family: "Noto Sans CJK SC", sans-serif;
    font-size: 55px;
    font-weight: 500;
    line-height: 80px;
}
```
FILE: charts.js
```js
const GREEN = '#7dffe0', RED = '#d84868', WHITE = '#f0f0f0';
let seed = 7;

function rand() {
    seed = (seed * 16807) % 2147483647;
    return seed / 2147483647;
}

// 折线上 x 处的插值
function at(points, x) {
    for (let i = 1; i < points.length; i++) {
        const [x0, y0] = points[i - 1], [x1, y1] = points[i];
        if (x <= x1) return y0 + (y1 - y0) * (x - x0) / (x1 - x0);
    }
    return points[points.length - 1][1];
}

// 滑动平均，让均线更平滑
function smooth(points, span) {
    const out = [];
    for (let x = 25; x <= 1847; x += 6) {
        const s = x > 1780 ? 2 : span;
        out.push([x, Math.round((at(points, Math.max(25, x - s)) + at(points, x) * 2 + at(points, x + s)) / 4)]);
    }
    return out;
}

function line(x1, y1, x2, y2, color, extra = '') {
    return `<line x1="${x1}" y1="${y1}" x2="${x2}" y2="${y2}" stroke="${color}" ${extra}/>`;
}
function bar(x, y, w, h, color) {
    return `<rect x="${x}" y="${y}" width="${w}" height="${h}" fill="${color}"/>`;
}
function text(x, y, str, color, extra = '') {
    return `<text x="${x}" y="${y}" fill="${color}" ${extra}>${str}</text>`;
}
function poly(points, color, width = 1) {
    return `<polyline points="${points.join(' ')}" fill="none" stroke="${color}" stroke-width="${width}"/>`;
}
function candle([x, type, top, bottom, high = top, low = bottom]) {
    const h = Math.max(bottom - top, 1);
    if (type === 'g') return line(x, high, x, low, GREEN) + bar(x - 2.5, top, 5, Math.max(h, 2), GREEN);
    if (type === 'w') return line(x, high, x, low, WHITE) + bar(x - 2.5, top, 5, Math.min(h, 2), WHITE);
    let s = line(x, high, x, top, RED) + line(x, bottom, x, low, RED);
    if (h < 3) return s + line(x - 3, top, x + 3, top, RED);
    return s + `<rect x="${x - 2}" y="${top}" width="4" height="${h}" fill="#000" stroke="${RED}"/>`;
}

// ---- 价格 ----
const trend = [[89,438],[97,442],[128,442],[131,448],[139,460],[146,470],[166,471],[173,475],[181,468],[188,478],[195,470],[235,468],[265,466],[278,455],[313,455],[327,459],[348,457],[362,464],[389,469],[405,460],[412,443],[419,443],[433,452],[446,450],[460,439],[480,446],[488,452],[498,460],[523,457],[530,463],[549,465],[558,487],[566,495],[572,499],[584,482],[593,470],[607,479],[625,478],[635,468],[650,476],[676,479],[692,470],[711,471],[725,468],[734,461],[740,469],[748,459],[762,461],[775,470],[794,475],[810,471],[818,466],[823,460],[852,458],[874,461],[887,453],[894,458],[901,471],[912,477],[922,471],[929,463],[938,458],[982,458],[1001,451],[1014,445],[1027,452],[1097,450],[1111,455],[1123,458],[1161,451],[1174,441],[1199,444],[1231,438],[1244,441],[1272,450],[1298,451],[1347,453],[1380,459],[1402,448],[1406,431],[1457,429],[1467,425],[1478,402],[1490,396]];
const candles = [];
for (let x = 89; x < 1480; x += 7) {
    const y0 = at(trend, x - 4), y1 = at(trend, x + 4), d = y1 - y0;
    const r = rand();
    const type = d > 3 ? 'g' : d < -3 ? 'r' : r < .3 ? 'g' : r < .72 ? 'r' : 'w';
    const size = type === 'w' || rand() < .35 && Math.abs(d) < 3 ? 1 : Math.abs(d) + rand() * 6;
    const mid = (y0 + y1) / 2 + (rand() - .5) * 4;
    const top = Math.round(mid - size / 2), bottom = Math.round(top + size);
    candles.push([x, type, top, bottom, top - Math.round(rand() * 6), bottom + Math.round(rand() * 5)]);
}
candles.push([412,'r',434,455,423,458],[559,'g',480,494,475,495],[573,'r',486,497,486,509],
    [734,'g',455,468],[894,'g',451,466],[1105,'w',450,451,439,454],
    [1483,'g',394,407],[1490,'r',398,403],[1497,'r',390,402,378],[1504,'g',379,392,357],[1511,'g',392,402],[1518,'r',396,402,393,408],[1525,'g',401,416],
    [1532,'r',409,409,407,412],[1539,'r',403,410,403,415],[1546,'r',403,403,390,406],[1553,'r',403,403],[1560,'r',399,403,396,407],[1567,'w',402,402,398,406],
    [1574,'r',391,402],[1581,'g',391,400],[1588,'g',399,410,397,412],[1595,'r',392,410],[1602,'w',395,398],[1609,'r',394,401,392,404],[1616,'g',392,402],
    [1623,'g',402,413,400,418],[1630,'r',410,410,398,413],[1637,'g',416,430],[1644,'r',421,428,418,429],[1651,'r',415,418,410,424],[1658,'g',411,415,410,417],
    [1665,'r',410,414,403,415],[1672,'r',406,410,405,412],[1679,'g',410,412],[1686,'r',411,411,401,413],[1693,'r',395,408,375,413],[1700,'g',396,403,394,405],
    [1707,'r',392,408,389],[1714,'g',384,387,380,388],[1721,'g',389,391],[1728,'w',393,394,391,400],[1735,'r',390,394,377,395],[1742,'w',390,391],
    [1749,'g',390,396,388,398],[1756,'g',399,405],[1763,'g',405,407,404,420],[1770,'w',404,405,402,410],[1777,'r',402,405,400,407],[1784,'r',400,400],
    [1790,'r',380,386,364,390],[1798,'r',344,375],[1805,'r',340,340,303,341],[1832,'r',176,200,176,214]);

let svg = line(1867, 110, 1867, 531, '#801030') + line(21, 530, 1920, 530, '#701028');
svg += line(82, 281, 1867, 281, '#fff', 'stroke-width="2"') + line(82, 375, 1867, 375, '#f0f0a8', 'stroke-width="2"');
svg += line(1601, 111, 1601, 531, '#fff', 'stroke-width="2"');
svg += candles.map(candle).join('');
svg += line(1825, 228, 1825, 240, GREEN) + bar(1822, 158, 6, 70, GREEN);
svg += line(1840, 132, 1840, 147, WHITE) + bar(1838, 147, 5, 86, GREEN) + line(1828, 131, 1840, 131, WHITE);
svg += `<rect x="1845" y="182" width="4" height="77" fill="none" stroke="${RED}"/>`;
svg += line(1811, 260, 1811, 272, '#888') + line(1808, 260, 1814, 260, '#888');
svg += line(1846, 270, 1846, 491, '#ccc', 'stroke-dasharray="3 3"');
[552, 678, 874, 958, 972, 1266, 1301, 1532, 1616, 1687, 1798, 1806, 1819, 1827, 1841].forEach(x => {
    svg += `<path d="M${x - 4} 116l4-5 4 5-4 5z" fill="#52b8a8"/>`;
});
[['27.61', 116], ['24.57', 185], ['21.52', 256], ['18.48', 325], ['15.43', 395], ['12.38', 465]].forEach(([s, y]) => {
    svg += text(1870, y, s, '#b02850');
});
svg += bar(1867, 272, 53, 17, '#5a089c') + text(1870, 285, '20.22', '#d030c0');
svg += text(1794, 135, '26.70', WHITE) + text(1836, 369, '16.11', '#f0f0b0');
svg += line(573, 508, 584, 508, '#ddd') + text(585, 513, '10.25', '#ddd');
svg += text(1002, 528, 'Q', '#e02848', 'style="font-size:11px"');
svg += bar(1526, 517, 13, 13, '#801028') + text(1527, 528, '财', '#fff', 'style="font-size:11px"');
svg += bar(1834, 517, 19, 13, '#a01030') + text(1835, 528, '8涨', '#fff', 'style="font-size:11px"');
svg += '<rect x="1823" y="491" width="44" height="20" fill="#04142c" stroke="#4878b0"/>' + text(1827, 506, '加自选', '#6aa8f0');
svg += '<path d="M1771 329C1782 330 1796 334 1803 341C1813 351 1816 366 1814 378C1812 391 1801 404 1795 408C1784 411 1770 404 1757 398C1745 392 1741 383 1741 373C1742 358 1750 345 1760 340C1767 336 1772 335 1778 337" fill="none" stroke="#f8dc50" stroke-width="4" stroke-linecap="round"/>';
svg += line(1853, 181, 1877, 181, '#fff', 'stroke-width="2"') + line(1865, 169, 1865, 193, '#fff', 'stroke-width="2"');
document.getElementById('price').innerHTML = svg;

// ---- 成交量 ----
svg = line(1867, 531, 1867, 639, '#701028') + line(1601, 552, 1601, 600, '#fff', 'stroke-width="2"');
const volTrend = [[24, 6], [390, 5], [405, 7], [412, 18], [430, 12], [460, 8], [560, 6], [800, 6], [1143, 7]];
const volMa = [];
for (let x = 26; x < 1143; x += 7) {
    const h = Math.round(at(volTrend, x) * (.6 + rand() * .7));
    if (rand() < .55) svg += bar(x - 3, 637 - h, 5, h, GREEN);
    else svg += `<rect x="${x - 2}" y="${637 - h}" width="4" height="${h}" fill="#000" stroke="${RED}"/>`;
    volMa.push([x, Math.round(636 - at(volTrend, x - 10) * .9)]);
}
svg += poly(volMa, '#e8e0c8');
svg += bar(1822, 552, 6, 84, GREEN) + bar(1838, 552, 5, 84, GREEN);
svg += `<rect x="1831" y="556" width="4" height="80" fill="none" stroke="${RED}"/><rect x="1845" y="580" width="4" height="56" fill="none" stroke="${RED}"/>`;
svg += poly([[1832, 595], [1840, 580], [1847, 575]], WHITE);
svg += text(1870, 557, '1274', '#ddd') + text(1870, 598, '337', '#7090b0');
document.getElementById('volume').innerHTML = svg;

// ---- 主力买卖 ----
svg = line(1867, 657, 1867, 777, '#380818') + line(1601, 657, 1601, 775, '#fff', 'stroke-width="2"');
for (let x = 26; x < 1850; x += 7) {
    svg += bar(x, 721, 4, x > 1400 ? 2 : 1, '#50a030');
}
svg += line(24, 720, 1820, 720, '#d8e098', 'stroke-width="2" stroke-dasharray="26 2 5 2 5 2"');
[[411,14,9],[418,4,6],[1406,12,13],[1413,5,6],[1475,10,13],[1482,5,6],[1489,8,5],[1496,8,7],[1503,12,11],[1510,4,6],[1545,8,3],[1692,16,12],[1699,10,5],[1734,9,4],[1790,24,14],[1797,18,16],[1804,20,19],[1811,18,12],[1825,46,53],[1832,28,38],[1839,40,47],[1846,26,22]].forEach(([x, up, down]) => {
    svg += bar(x - 2, 720 - up, 4, up, '#901424') + bar(x - 2, 721, 4, down, '#48d040');
});
svg += poly([[403, 720], [411, 713], [418, 720]], WHITE) + poly([[1469, 720], [1475, 712], [1482, 721]], WHITE) + poly([[1686, 720], [1692, 715], [1699, 720]], WHITE);
svg += poly([[1786, 720], [1790, 713], [1804, 716], [1811, 721], [1818, 719], [1825, 729], [1832, 725], [1839, 737], [1846, 716]], '#f0d0b0');
svg += text(1869, 682, '56750', '#bbb') + text(1873, 730, '5782', '#bbb') + text(1869, 771, 'X10', '#bbb');
document.getElementById('force').innerHTML = svg;

// ---- MACD ----
const diff = [[25,925],[43,923],[82,930],[131,940],[151,952],[184,959],[208,953],[265,945],[302,935],[327,932],[367,933],[400,937],[420,930],[478,922],[506,930],[543,935],[571,949],[588,948],[592,945],[629,944],[646,941],[693,938],[756,928],[794,932],[815,932],[840,927],[895,925],[916,934],[945,930],[1004,927],[1017,923],[1097,924],[1134,931],[1164,930],[1202,927],[1231,923],[1256,925],[1283,931],[1327,933],[1405,933],[1431,920],[1457,917],[1465,920],[1480,911],[1504,902],[1518,903],[1530,908],[1578,911],[1617,914],[1632,922],[1648,931],[1691,932],[1713,923],[1752,920],[1769,928],[1791,926],[1804,903],[1819,860],[1832,828],[1838,826],[1847,816]];
const dea = [[25,926],[60,926],[120,937],[170,950],[200,954],[240,950],[300,940],[350,933],[400,937],[440,930],[480,924],[540,934],[592,944],[630,944],[700,940],[770,932],[815,932],[880,926],[930,931],[1017,924],[1097,925],[1140,930],[1230,925],[1290,932],[1405,934],[1450,922],[1470,919],[1520,908],[1578,911],[1625,914],[1665,927],[1700,930],[1752,923],[1791,928],[1810,920],[1825,895],[1847,858]];
const hist = [[25,2],[60,-3],[100,-9],[150,-20],[185,-12],[205,2],[260,7],[290,16],[320,12],[370,2],[400,-2],[425,8],[480,5],[505,-5],[560,-14],[590,-14],[620,2],[650,8],[740,9],[780,3],[815,1],[850,7],[890,2],[915,-9],[940,-1],[1010,3],[1060,-2],[1130,-5],[1180,2],[1250,-2],[1290,-6],[1350,-1],[1405,2],[1430,14],[1465,10],[1505,22],[1530,4],[1560,-1],[1612,-3],[1620,-8],[1650,-18],[1690,-3],[1710,7],[1750,6],[1770,-5],[1791,3],[1811,55],[1825,85],[1832,104],[1840,90],[1847,76]];
svg = line(21, 960, 1867, 960, '#380818') + line(1867, 815, 1867, 977, '#280610');
for (let x = 28; x < 1848; x += 7) {
    const h = at(hist, x);
    svg += line(x, 934, x, Math.round(934 - h), h > 0 ? (h > 40 ? '#b83848' : '#984858') : '#60a070');
}
svg += poly(smooth(diff, 6), '#f0f0f0', 1.5) + poly(smooth(dea, 14), '#f0f0b0', 1.5);
svg += line(1601, 815, 1601, 959, '#fff', 'stroke-width="2"');
[[47,926],[377,926],[488,917],[789,924],[901,921],[1062,917],[1251,919],[1531,901],[1755,915]].forEach(([x, y]) => {
    svg += `<path d="M${x - 2} ${y - 6}h4v5h3l-5 8-5-8h3z" fill="#30ff40"/>`;
});
[[40,940],[209,952],[405,942],[628,952],[818,937],[944,935],[1167,936],[1406,937],[1693,936],[1791,932]].forEach(([x, y]) => {
    svg += `<path d="M${x - 2} ${y + 6}h4v-5h3l-5-8-5 8h3z" fill="#f83050"/>`;
});
[['12',31],['01',146],['02',272],['03',398],['04',545],['05',692],['06',825],['07',965],['08',1126],['09',1273],['10',1427],['11',1546],['01',1847]].forEach(([s, x]) => {
    svg += text(x, 972, s, '#c03058', 'text-anchor="middle"');
});
svg += bar(1602, 960, 174, 17, '#5a10a8') + text(1604, 973, '2025-11-14 五 量 分析周期(日)', '#d030b0');
[['+2.82', 818], ['+2.12', 829], ['+1.41', 865], ['+0.700', 901], ['+0', 937]].forEach(([s, y]) => {
    svg += text(1869, y, s, '#c02848');
});
document.getElementById('macd').innerHTML = svg;
```
